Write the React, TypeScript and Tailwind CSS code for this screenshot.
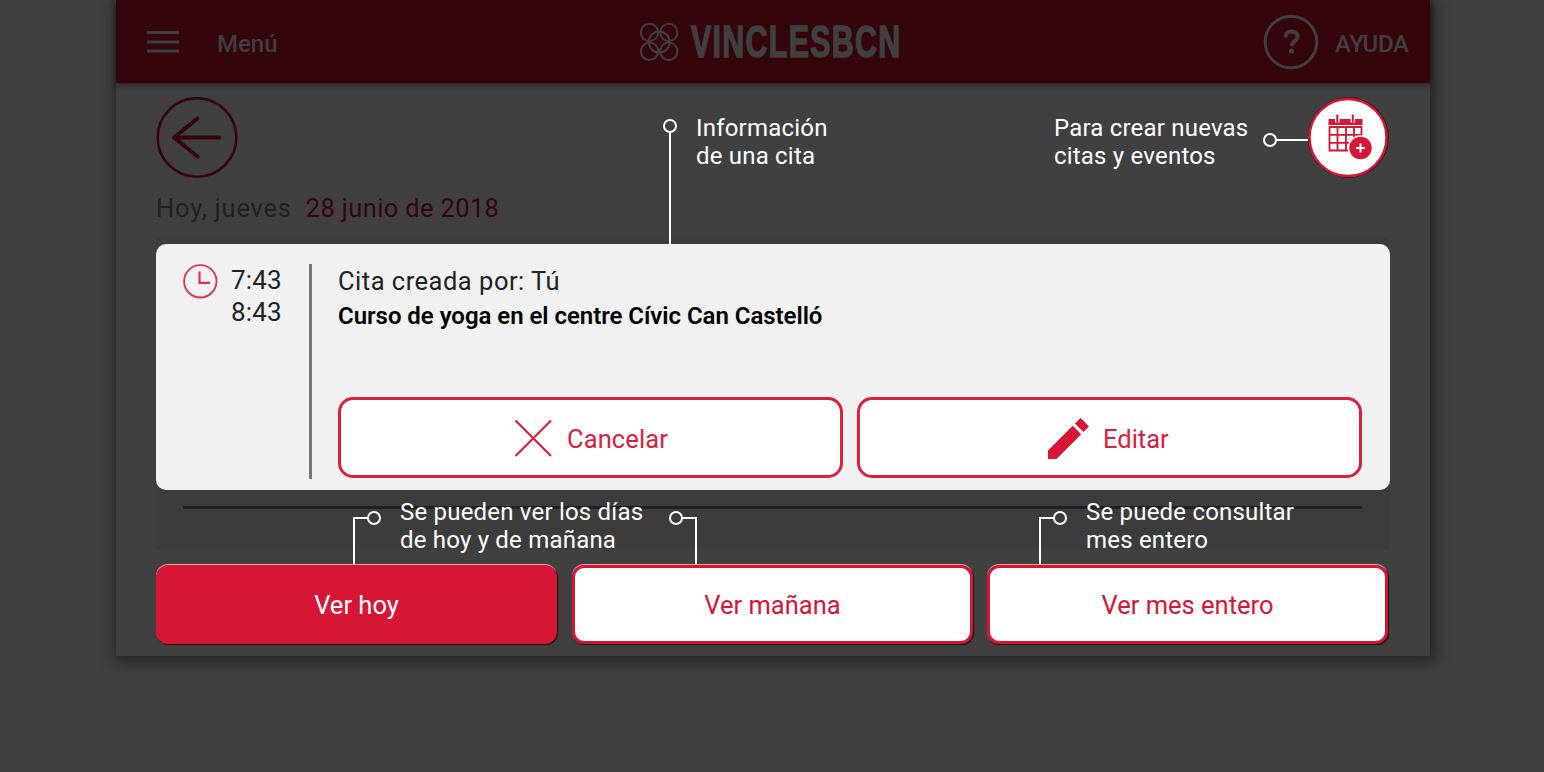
import type { ReactNode } from "react";

function Logo() {
  return (
    <div className="flex h-[40px] w-[266px] items-center">
      <svg width="40" height="40" viewBox="0 0 40 40" fill="none" stroke="#404040" strokeWidth="2">
        <circle cx="10.500" cy="10.500" r="8.700" />
        <circle cx="29.800" cy="10.500" r="8.700" />
        <circle cx="10.500" cy="29.300" r="8.700" />
        <circle cx="29.800" cy="29.300" r="8.700" />
        <circle cx="20.200" cy="20" r="10.500" />
      </svg>
      <div className="ml-[12px] h-[46px] w-[212px] whitespace-nowrap">
        <span className="inline-block origin-left scale-x-[0.69] font-['Liberation_Sans'] text-[44px] leading-[46px] font-bold tracking-[1.9px] text-[#404040] [-webkit-text-stroke:1.5px_#404040] [stroke-linejoin:round]">
          VINCLESBCN
        </span>
      </div>
    </div>
  );
}

function Header() {
  return (
    <header className="flex h-[83px] items-center bg-[#35050d] pr-[21px] pl-[31px] text-[#404040] shadow-[0_2px_6px_rgba(0,0,0,0.45)]">
      <svg width="32" height="22" viewBox="0 0 32 22" fill="#404040">
        <rect y="0" width="32" height="3" />
        <rect y="9.5" width="32" height="3" />
        <rect y="18.5" width="32" height="3" />
      </svg>
      <span className="mt-[5px] ml-[38px] w-[60px] text-[24px] leading-7 font-medium">Menú</span>
      <div className="ml-[362px]">
        <Logo />
      </div>
      <div className="ml-auto flex items-center">
        <svg width="56" height="56" viewBox="0 0 56 56" fill="none" stroke="#404040" className="mt-[1px]">
          <circle cx="28" cy="28" r="25.8" strokeWidth="3" />
          <path d="M22.500 23.500c0-4 2.600-6.100 6-6.100 3.500 0 6 2.100 6 5.300 0 4.600-5.900 4.800-5.900 9.600" strokeWidth="4" />
          <circle cx="28.500" cy="37" r="2.600" fill="#404040" stroke="none" />
        </svg>
        <span className="mt-[5px] ml-[16px] w-[74px] text-[24px] leading-7 font-medium tracking-[-0.3px]">AYUDA</span>
      </div>
    </header>
  );
}

function BackButton() {
  return (
    <button aria-label="Volver">
      <svg width="82" height="82" viewBox="0 0 82 82" fill="none" stroke="#35050d">
        <circle cx="41" cy="40.500" r="39.300" strokeWidth="2.600" />
        <path d="M63 40.500H18M41.500 21.500L18 40.500l23.500 19" strokeWidth="4" strokeLinecap="round" strokeLinejoin="round" />
      </svg>
    </button>
  );
}

function AddButton() {
  return (
    <button aria-label="Crear">
      <svg width="82" height="82" viewBox="0 0 82 82" fill="none">
        <circle cx="40.300" cy="40.500" r="40.400" fill="#1c0508" />
        <circle cx="40" cy="40.500" r="38.600" fill="#fff" stroke="#d51635" strokeWidth="2.600" />
        <path d="M20.500 22h34v6h-34z" fill="#d51635" />
        <path d="M29.300 17v8.500M44.800 17v8.500" stroke="#fff" strokeWidth="4.500" />
        <path d="M29.300 17.500v8M44.800 17.500v8" stroke="#d51635" strokeWidth="2" />
        <path d="M21.500 30h32v23.500h-32zM21.500 37.800h32M21.500 45.800h32M29.500 30v23.500M38 30v23.500M46 30v23.500" stroke="#d51635" strokeWidth="1.800" />
        <circle cx="52.500" cy="51" r="12.800" fill="#fff" />
        <circle cx="52.500" cy="51" r="11.200" fill="#d51635" />
        <path d="M52.500 46.500v9M48 51h9" stroke="#fff" strokeWidth="2" />
      </svg>
    </button>
  );
}

function ActionButton({ children }: { children: ReactNode }) {
  return (
    <button className="flex h-[81px] w-[505px] items-center rounded-[15px] border-[3px] border-[#d8203f] bg-white text-[25.500px] text-[#d8203f]">
      {children}
    </button>
  );
}

function AppointmentCard() {
  return (
    <section className="flex h-[246px] w-[1234px] rounded-[10px] bg-[#f1f1f1] pt-[20px] pl-[27px] text-[#222]">
      <svg width="35" height="35" viewBox="0 0 35 35" fill="none" stroke="#dc3450">
        <circle cx="17.300" cy="17.300" r="16.200" strokeWidth="1.800" />
        <path d="M16.500 7.500v11.300H27" strokeWidth="2.200" />
      </svg>
      <div className="ml-[13px] w-[78px] text-[26px] leading-8 tracking-[0.2px]">
        <p>7:43</p>
        <p>8:43</p>
      </div>
      <div className="h-[215px] w-[3px] bg-[#777]" />
      <div className="ml-[26px]">
        <p className="h-8 pt-[1px] text-[25.500px] leading-8 tracking-[0.500px]">Cita creada por: Tú</p>
        <p className="mt-[4px] h-8 text-[24px] leading-8 font-semibold tracking-[-0.040px] text-black">
          Curso de yoga en el centre Cívic Can Castelló
        </p>
        <div className="mt-[65px] flex gap-[14px]">
          <ActionButton>
            <svg width="38" height="38" viewBox="0 0 38 38" className="ml-[173px]" stroke="#d8203f" strokeWidth="2.200">
              <path d="M1.500 1.500l35.500 35.500M37 1.500L1.500 37" />
            </svg>
            <span className="ml-[15px] pt-[3px] tracking-[0.100px]">Cancelar</span>
          </ActionButton>
          <ActionButton>
            <svg width="41" height="41" viewBox="3 3 18 18" className="mt-[2px] ml-[188px]" fill="#d51635">
              <path d="M3 17.250V21h3.750L17.600 10.150l-3.750-3.750L3 17.250zM21 6.700L17.300 3l-2.500 2.450 3.750 3.750z" />
            </svg>
            <span className="ml-[14px] pt-[3px]">Editar</span>
          </ActionButton>
        </div>
      </div>
    </section>
  );
}

function ViewButtons() {
  const base =
    "flex h-[79px] items-center justify-center rounded-[12px] border-[3px] border-[#d51635] pt-[2px] text-[25.500px] shadow-[1px_1px_1px_#1c0508,0_-1px_0_#e8a0ac]";
  return (
    <nav className="mt-[15px] flex">
      <button className={`${base} w-[401px] bg-[#d51635] text-white`}>
        <span>Ver hoy</span>
      </button>
      <button className={`${base} ml-[15px] w-[401px] bg-white text-[#d51635]`}>
        <span>Ver mañana</span>
      </button>
      <button className={`${base} ml-[14px] w-[401px] bg-white text-[#d51635]`}>
        <span>Ver mes entero</span>
      </button>
    </nav>
  );
}

function Connectors() {
  return (
    <svg className="pointer-events-none absolute inset-0" width="1544" height="772" fill="none" stroke="#fff" strokeWidth="2">
      <circle cx="670" cy="126" r="6" />
      <path d="M670 132v113" />
      <circle cx="1270" cy="140" r="6" />
      <path d="M1276 140h32" />
      <circle cx="374" cy="518" r="6" />
      <path d="M368 518h-14v46" />
      <circle cx="676" cy="518" r="6" />
      <path d="M682 518h14v46" />
      <circle cx="1060" cy="518" r="6" />
      <path d="M1054 518h-14v46" />
    </svg>
  );
}

const note = "absolute whitespace-nowrap text-[24px] leading-7 tracking-[0.200px] text-white";

export default function App() {
  return (
    <div className="relative h-[772px] w-[1544px] overflow-hidden bg-[#404040] font-['Roboto',sans-serif]">
      <div className="ml-[116px] h-[656px] w-[1314px] bg-[#404040] shadow-[2px_3px_14px_3px_rgba(0,0,0,0.45)]">
        <Header />
        <main className="px-[40px] pt-[14px]">
          <div className="flex h-[81px] justify-between">
            <BackButton />
            <AddButton />
          </div>
          <p className="h-[60px] pt-[14px] text-[25.500px] leading-8 tracking-[0.800px] text-[#202020]">
            <span>Hoy, jueves</span>
            <span className="ml-[14px] tracking-[0.350px] text-[#35050d]">28 junio de 2018</span>
          </p>
          <div className="h-[312px] w-[1233px] bg-[#3c3c3c] pt-[6px]">
            <AppointmentCard />
            <div className="mt-[16px] ml-[27px] h-[3px] w-[1179px] bg-[#202020]" />
          </div>
          <ViewButtons />
        </main>
      </div>
      <Connectors />
      <p className={`${note} top-[114px] left-[696px]`}>
        Información
        <br />
        de una cita
      </p>
      <p className={`${note} top-[114px] left-[1054px]`}>
        Para crear nuevas
        <br />
        citas y eventos
      </p>
      <p className={`${note} top-[498px] left-[400px]`}>
        Se pueden ver los días
        <br />
        de hoy y de mañana
      </p>
      <p className={`${note} top-[498px] left-[1086px]`}>
        Se puede consultar
        <br />
        mes entero
      </p>
    </div>
  );
}
